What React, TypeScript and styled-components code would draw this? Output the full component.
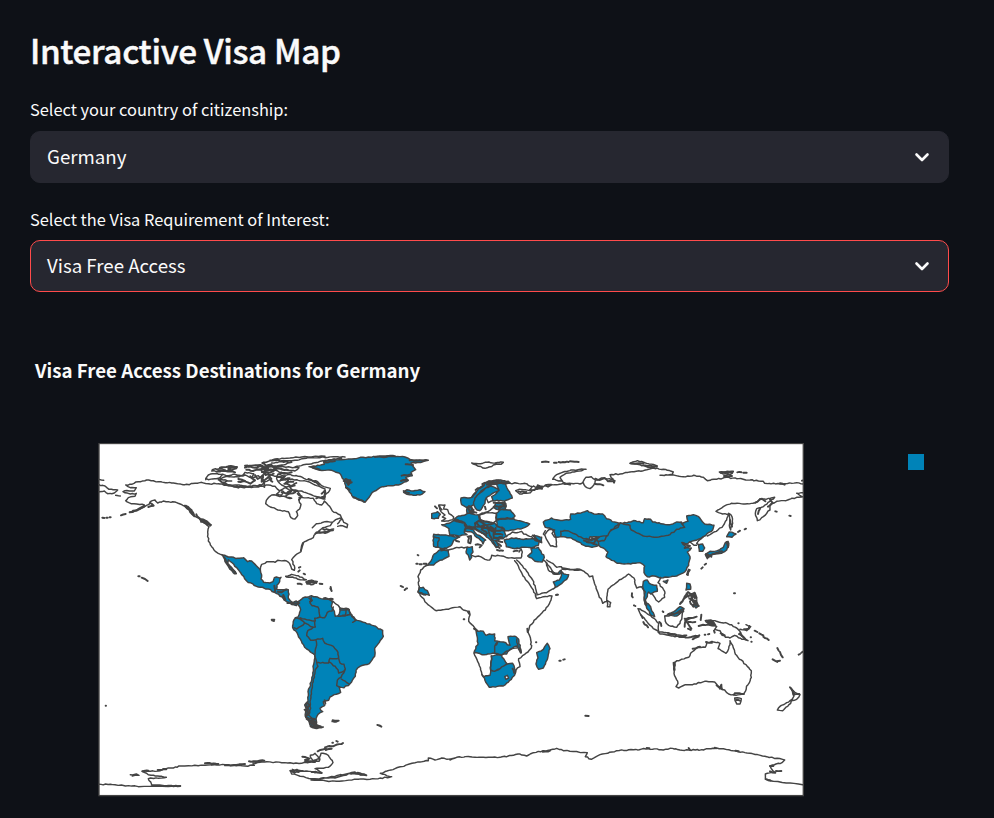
import React from "react";
import styled, { createGlobalStyle } from "styled-components";

const GlobalStyle = createGlobalStyle`
  * { box-sizing: border-box; }
  body {
    margin: 0;
    background: #0e1117;
    color: #fafafa;
    font-family: "Noto Sans CJK SC", "Noto Sans", sans-serif;
  }
`;

const Page = styled.main`
  display: flex;
  flex-direction: column;
  width: 994px;
  height: 818px;
  padding: 27px 45px 0 30px;
  overflow: hidden;
`;

const Title = styled.h1`
  margin: 0;
  height: 46px;
  font-size: 33.3px;
  font-weight: 500;
  line-height: 46px;
  letter-spacing: -0.37px;
  -webkit-text-stroke: 0.45px #fafafa;
  white-space: nowrap;
`;

const Field = styled.section<{ $gap: number }>`
  display: flex;
  flex-direction: column;
  margin-top: ${(p) => p.$gap}px;
`;

const Label = styled.label<{ $space: number }>`
  height: 26px;
  margin-bottom: ${(p) => p.$space}px;
  font-size: 16.4px;
  line-height: 26px;
`;

const Select = styled.div<{ $active?: boolean }>`
  display: flex;
  align-items: center;
  justify-content: space-between;
  height: 52px;
  padding: 0 15px 0 16px;
  border: 1px solid ${(p) => (p.$active ? "#ff4b4b" : "#262730")};
  border-radius: 10px;
  background: #262730;
  font-size: 18.7px;
  line-height: 28px;
`;

const Value = styled.span`
  height: 30px;
`;

const Chevron = styled.svg`
  width: 22px;
  height: 22px;
  fill: none;
  stroke: #fafafa;
  stroke-width: 2.6;
  stroke-linecap: round;
  stroke-linejoin: round;
`;

const ChartTitle = styled.h2`
  margin: 64px 0 0 5px;
  height: 28px;
  font-size: 18.7px;
  font-weight: 700;
  line-height: 28px;
  white-space: nowrap;
`;

const ChartRow = styled.div`
  display: flex;
  align-items: flex-start;
  justify-content: space-between;
  margin: 59px 25.5px 0 68px;
`;

const MapSvg = styled.svg`
  width: 706px;
  height: 354px;
`;

const LegendSwatch = styled.div`
  width: 16px;
  height: 16px;
  margin-top: 11px;
  background: #0083b8;
`;

type Sheet = { x: number; y: number; land?: string[]; coast?: string[]; holes?: string[]; specks?: string[] };

// Each sheet lists "x,y" outlines in third-pixel units from its own origin.
const sheets: Sheet[] = [
  {
    x: 95, y: 435,
    land: [
      "382,360 400,366 410,366 428,370 446,368 458,380 470,378 484,392 496,404 500,420 498,432 506,442 524,444 534,440 538,428 558,427 554,440 546,450 544,462 580,464 582,478 580,490 592,502 604,498 614,504 604,512 590,508 575,500 562,486 545,476 520,462 490,456 455,438 446,424 430,404 412,384 400,374 398,386 410,398 424,416 418,416 402,398 390,380",
    ],
    coast: [
      "12,149 30,153 42,163 68,165 58,174 38,176 28,168 12,170",
      "12,133 26,136", "62,181 76,183",
      "520,150 490,156 440,157 400,152 370,146 340,146 318,142 300,145 270,149 230,144 190,140 155,135 130,140 110,148 92,150 106,158 124,158 118,168 90,167 84,170 106,177 124,175 120,184 100,188 92,197 108,206 125,207 148,210 132,220 104,232 130,224 150,214 162,208 166,200 180,195 188,204 205,198 220,200 245,203 268,212 282,224 292,238 312,250 325,262 342,275 338,292 340,318 350,335 362,350 382,360",
      "496,404 500,388 516,380 540,382 548,376 575,378 584,386 590,402 598,406 598,392 590,374 600,362 618,350 624,326 634,318 655,308 662,296 690,290 716,282",
      "652,278 664,266 690,260 712,262 706,272 684,278 660,296",
      "712,262 722,254 740,250",
      "590,190 560,184 530,180 514,196 512,206 526,216 556,226 580,230 588,248 600,252 608,242 604,230 614,222 618,208 612,196 618,184 610,172",
      "612,188 640,188 655,190 665,206 680,210 688,198 704,214 712,228 736,240 740,250",
      "520,150 540,154 552,166 566,170 560,180 544,178 556,166 570,158 590,168 580,178 570,184 590,190",
      "545,126 580,118 610,124 640,134 668,140 680,152 706,160 700,172 684,186 690,192 660,184 640,176 620,168 600,170 585,158 600,152 575,156 560,150 548,138 545,126",
      "370,134 395,124 430,126 450,120 470,128 490,122 500,130 510,140 500,150 470,154 440,152 400,150 385,142 410,138 372,134",
      "332,134 340,120 360,116 384,118 370,130 340,134 332,130",
      "352,104 375,100 392,106 376,110 350,108",
      "505,82 540,76 600,76 640,68 700,67 750,66",
      "525,76 560,70 620,66 690,64",
      "600,96 640,88 690,76 740,70", "530,84 560,80 590,82 560,90 540,94 612,98 600,108 560,104 520,92",
      "500,112 530,104 560,112 545,124 520,118 530,132 510,140",
      "548,138 580,132 610,136 640,140 660,150 690,162",
      "572,424 590,418 610,422 634,434 616,434 592,426 574,426",
      "384,118 400,122 420,118 440,122 450,112 476,116 470,128",
    ],
    specks: [
      "375,98 400,94 426,96 400,100", "392,108 420,112 400,104", "450,92 480,98 500,94", "454,104 474,108 496,104 520,100 506,114 532,110 550,100 580,106", "430,132 450,138 430,140", "480,120 488,132 504,120 500,140 520,126 532,140", "502,84 512,92 528,88 540,102 520,106 502,98",
      "546,126 570,124 556,136 584,130 572,144 595,140", "560,172 580,176 600,172", "664,190 690,186 690,166 680,176", "268,212 280,216 294,232 298,244 286,232 276,218", "304,238 316,252 330,256", "318,260 334,258 348,270 340,268 328,264", "160,216 176,212 166,204", "104,232 130,224 148,214", "78,241 92,237", "22,248 28,249", "34,248 38,248", "44,247 47,247", "130,424 134,424", "140,428 150,432 158,438", "624,324 618,346",
      "634,442 650,436 666,440 654,448 636,446", "608,446 620,448", "674,446 682,447", "612,398 616,396", "610,410 614,406", "626,416 630,418", "706,460 710,468", "684,282 714,286 690,294 672,290", "400,150 430,158 440,152 462,156", "530,554 538,554",
      "538,452 540,470", "548,470 560,472 574,464", "562,484 568,494",
      "366,104 384,108 408,106 424,100", "450,98 470,92 496,90 508,96", "490,104 516,96 540,94", "500,108 512,120 536,116", "466,124 480,136 466,146 452,140", "506,140 508,156", "372,134 388,148 410,152", "550,118 568,114 590,112", "568,146 592,152 604,144", "608,176 620,184 612,194", "574,176 590,164 608,168", "640,132 664,142 672,150", "272,212 290,226 296,240", "308,246 322,258 346,272", "386,366 396,382", "400,388 420,412", "634,440 664,444",
    ],
  },
  {
    x: 285, y: 435,
    land: [
      "72,95 118,88 116,80 140,74 190,72 250,66 310,62 360,66 376,74 430,76 400,82 378,84 384,94 392,104 378,112 382,122 362,128 370,136 340,150 310,152 285,158 262,172 250,190 240,202 220,194 205,188 194,172 182,158 178,134 162,114 140,106 105,106",
      "356,172 366,164 385,168 405,164 420,170 410,178 385,181 366,178",
      "440,236 458,230 466,238 460,250 440,250",
      "446,298 490,302 524,306 506,316 500,330 484,340 466,340 460,336 446,334 444,316",
      "462,346 470,342 490,346 492,364 476,372 458,380 446,390 424,392 438,378 444,362",
    ],
    coast: [
      "462,210 480,210 476,222 488,224 492,236 506,246 504,254 484,258 470,258 482,250 472,246 480,240 468,230 464,222 462,210",
      "158,266 172,252 176,262 188,268 186,278 172,272 158,274",
      "448,306 462,308 458,334",
      "560,84 580,86 600,82 630,84 655,82 648,88 625,90 612,96 600,100 580,94 560,84",
    ],
    specks: ["374,76 420,76", "362,88 384,90", "350,122 378,118", "348,138 366,134", "176,138 200,142 190,150 182,138", "186,158 194,164", "118,82 150,78", "80,96 104,104", "514,318 522,320", "398,360 400,361", "394,386 398,386", "404,388 410,388", "416,386 424,386", "350,454 354,456", "362,462 366,460", "450,214 456,220", "462,212 470,224", "356,168 372,174", "206,186 236,200", "182,132 196,136", "270,66 330,64"],
  },
  {
    x: 425, y: 470,
    land: [
      "50,164 72,160 86,152 96,150 118,158 122,172 118,188 126,194 100,198 74,194 72,176",
      "86,152 100,138 118,136 128,130 142,132 160,134 164,150 152,160 150,172 126,172 118,158",
      "126,130 126,114 140,108 140,122 148,128",
      "120,176 150,172 146,182 156,194 168,200 182,210 178,212 174,222 166,210 150,198 140,186 122,184",
      "150,160 164,152 184,156 210,160 216,170 238,178 244,198 234,206 222,208 212,212 222,232 212,230 200,214 180,196 164,184 152,176",
      "214,150 240,146 266,146 284,152 314,162 300,172 290,176 272,178 252,182 240,182 232,172 216,168",
      "214,130 230,118 256,120 270,138 260,146 216,148",
      "206,112 212,100 240,96 244,108 240,118 214,118",
      "108,84 140,82 152,66 166,52 186,36 220,30 250,34 256,40 242,42 216,36 190,48 170,66 150,84 146,104 124,112 110,104",
      "146,104 150,84 172,60 196,48 212,54 222,62 200,72 184,84 180,100 172,112 164,122 156,120",
      "214,40 242,40 246,54 256,72 262,84 240,92 204,92 200,80 216,68 222,60",
      "238,210 260,204 290,208 320,206 344,212 340,226 326,232 300,232 270,236 244,230",
      "318,236 340,232 348,244 358,262 352,276 330,274 308,258 320,248",
      "322,196 350,202 350,218 338,210", "126,232 142,230 144,246 138,254 140,262 134,270 130,256 124,250",
    ],
    coast: [
      "48,242 70,240 90,234 128,232", "140,256 150,260 160,258 180,268 194,270 200,256 230,258 250,264 274,264 288,264 292,246 288,236",
      "244,200 262,186 276,188 290,184 296,192 320,200 326,206", "164,134 184,128 214,130 214,152 206,158 184,154 166,148",
      "256,40 300,40 322,50 314,62 282,58 272,62 284,72 316,68 330,58 350,56 340,48", "184,84 190,98 204,92", "164,134 178,128 190,124 206,112",
      "354,270 366,280 380,300 390,312", "282,246 286,240",
    ],
    specks: ["128,200 138,198 136,220 130,218 132,204", "152,224 170,226 164,232", "216,240 234,242", "266,244 278,242", "212,212 232,216", "206,218 214,232", "152,60 176,46", "172,42 206,32 222,32", "186,44 212,42 230,36", "128,114 140,128", "146,126 154,128", "206,98 240,102", "206,110 240,110", "164,154 184,166 206,160", "156,170 184,174 202,184", "176,162 170,178 186,190", "186,168 206,180 206,200", "190,178 194,196 206,212", "212,174 208,192 232,194", "206,204 232,202", "118,158 126,170 148,174", "92,212 100,214", "280,64 304,66", "338,46 354,50", "164,134 164,152 150,160", "92,148 112,158", "180,110 182,118", "328,196 330,210 348,216", "130,110 134,126 146,120", "132,108 142,116 138,130", "152,178 168,186 184,196", "196,170 212,182 236,182", "218,220 228,228", "218,230 224,234", "156,160 166,170 178,168", "126,174 142,178", "142,80 152,68", "190,40 224,38 246,38", "242,102 222,116", "220,148 248,144"],
  },
  {
    x: 530, y: 440,
    land: [
      "40,246 64,234 84,240 104,240 122,238 122,222 150,220 172,212 192,222 218,222 230,236 254,246 270,250 264,262 240,274 234,286 210,290 180,290 176,300 160,296 140,284 110,272 92,274 92,290 78,292 70,272 58,264 46,262",
      "92,274 110,272 140,284 160,296 176,300 210,290 234,286 222,302 204,304 206,316 186,322 162,316 146,306 124,294 92,290",
      "270,248 300,256 304,270 340,288 380,292 420,284 440,268 464,262 454,250 474,244 470,228 490,224 506,230 524,252 552,256 548,270 532,280 520,290 504,298 484,304 472,312 458,312 470,322 484,324 472,336 480,350 476,376 464,396 440,408 414,412 392,414 372,408 352,410 342,398 344,378 330,368 302,372 262,370 228,350 234,336 220,324 206,316 204,304 222,302 234,286 240,274",
      "272,250 296,246 316,242 340,248 344,236 362,238 368,246 400,252 420,254 436,248 454,246 464,262 440,268 420,284 380,292 340,288 304,270 300,256",
      "340,424 352,420 358,430 380,436 382,454 362,462 356,456 352,470 346,480 350,496 342,480 346,456 338,440",
      "344,484 362,500 374,530 364,526 350,504", "400,424 414,420 410,430", "470,404 476,388 480,390 474,406", "468,450 470,430 480,432 482,448",
      "412,524 436,512 450,500 462,506 458,516 440,528", "506,314 518,312 524,324 518,334 508,334",
      "526,344 540,334 562,332 580,322 586,308 594,304 596,318 590,330 574,340 556,342 540,346 532,356", "590,290 598,276 618,282 606,292", "488,496 500,484 506,498 498,504",
    ],
    coast: [
      "46,282 58,268 74,270 66,280 78,294 80,320 62,318 52,302 40,282 46,272",
      "98,384 120,388 150,388 166,398 178,410 188,408 192,424 204,458 218,490 230,484 234,448 264,424 296,402 312,414 320,444 334,440 342,452 344,480",
      "232,482 242,488 240,500 232,500 232,482", "392,412 384,428 404,454 404,472 386,486 378,480 366,462",
      "520,290 506,302 500,310 506,314", "480,306 492,316 500,316", "596,220 606,230 608,250 602,270 598,256 600,240 596,220",
      "532,288 552,276 576,262 590,240 596,222 578,222 558,214 580,200 604,190 640,192 676,188 690,176 708,178 734,172 720,184 700,200 680,206 676,220 682,242 700,230 720,210 722,192 740,184 768,182 800,172 820,170", "800,160 820,158", "804,162 816,170",
      "10,138 30,144 50,134 80,134 118,130 150,132 160,124 168,112 184,110 196,120 192,134 180,146 166,140 160,128",
      "196,120 220,114 250,118 240,104 270,102 300,96 340,92 370,84 400,88 430,96 426,104 390,106 420,104 460,110 490,106 520,112 532,122 560,118 590,112 620,116 660,120 700,124 704,130 750,132 800,128 820,132",
      "68,118 80,104 100,96 130,90 168,88 140,94 108,100 90,112 98,124 68,118", "300,70 322,62 350,70 382,78 360,82 330,74 300,70", "568,96 610,94 600,104 580,102 568,96",
    ],
    specks: ["36,66 56,66", "72,68 80,68", "86,66 116,66", "120,64 146,66", "302,70 340,70", "340,76 380,80", "572,98 606,98", "582,108 606,108", "622,97 634,97", "640,98 650,98", "816,122 820,121", "0,150 14,150 24,136 36,146", "46,136 54,140 64,134", "196,116 210,120 224,114 234,124 254,122 252,128", "196,132 220,136", "100,128 120,134", "750,130 764,134", "676,188 696,176 706,184", "720,178 728,188 714,200", "736,214 740,215", "778,227 782,228", "644,268 648,266", "624,276 630,272", "600,240 606,260", "612,460 615,460", "524,374 528,371", "514,386 518,382", "168,296 186,300 206,292 190,310 170,306", "186,294 202,302", "456,308 480,318 464,324", "530,350 550,342 576,334", "450,492 464,470 470,462", "474,456 482,462 494,458 500,474 490,466 484,480 498,484 492,492", "480,484 490,500", "306,460 308,472", "312,496 316,498", "398,514 400,516", "78,465 82,464", "690,206 684,222", "480,466 490,460 494,474", "484,470 490,486 500,480", "494,494 506,498", "534,344 544,350", "528,342 536,352", "590,306 594,322", "162,302 184,308 200,314", "416,522 440,520 456,508", "448,522 460,514", "470,460 476,470"],
  },
  {
    x: 270, y: 575,
    land: [
      "82,84 100,68 124,62 160,72 182,76 208,98 236,102 246,122 256,134 280,142 310,152 338,166 340,184 328,202 314,220 314,244 298,266 270,274 258,286 256,304 240,326 222,338 208,336 212,352 180,366 176,376 160,380 164,392 150,400 158,410 144,418 138,432 140,442 120,440 106,424 108,400 104,390 114,380 114,350 124,320 130,280 134,240 110,222 96,204 84,180 68,158 72,134 84,126 92,104",
      "116,436 136,440 140,452 160,456 140,460 120,450",
    ],
    holes: ["188,78 208,96 210,108 204,122 196,124 190,104 184,94"],
    coast: [
      "124,66 120,84 126,92 144,96 148,116 150,126 134,130 136,156 114,166 110,182 122,196 138,194 140,210 134,240",
      "150,126 164,128 172,112 186,108 190,96", "138,194 158,190 164,204 190,214 204,232 206,250", "134,240 140,262 176,264 180,250 206,250 210,264 222,268 226,282 222,288 206,294", "180,262 204,284 206,294", "226,282 214,306 202,316 200,332 208,336", "214,312 236,326", "140,262 144,274 136,284 130,320 124,350 120,380 122,400 116,420 130,436",
      "76,128 90,132 104,144 92,154 80,162 72,158", "90,128 104,132 132,138", "104,144 128,156", "210,104 228,104 226,120 212,124", "228,104 238,104 240,118 228,120", "204,124 220,122 246,120", "248,142 258,136",
    ],
    specks: ["188,436 206,437 192,440", "322,450 334,455", "6,136 12,138", "118,70 126,76 120,80", "112,382 120,392 110,400", "104,404 118,412 108,422", "112,428 136,434 120,442 150,454 132,456", "164,376 166,386", "162,70 188,72", "40,60 46,74", "52,84 68,84 84,84", "108,386 112,410 108,426", "114,396 114,420", "110,432 130,446 146,456", "118,438 134,452", "128,440 138,448", "122,454 140,460 152,454", "66,88 78,86", "182,36 184,46", "246,124 256,134"],
  },
  {
    x: 400, y: 560,
    land: [
      "54,96 58,82 70,82 82,92 88,106 70,104",
      "228,212 250,214 258,226 268,222 284,222 284,242 294,244 290,254 284,258 284,280 252,284 222,278 234,250",
      "284,258 294,244 310,246 330,256 324,230 348,230 356,238 360,262 364,278 356,268 350,258 330,270 320,282 304,284 284,280",
      "274,288 290,284 304,286 322,312 300,326 282,334 272,330",
      "246,344 252,350 270,346 272,330 284,334 300,326 322,312 338,310 344,326 346,340 334,358 310,378 268,382 258,368",
      "484,34 492,42 506,44 500,58 486,70 466,82 460,66 478,60 484,48", "456,36 474,40 484,30 480,42 460,42", "442,250 450,266 444,290 430,324 416,328 408,312 414,294 410,278 430,268",
    ],
    holes: ["314,350 322,346 326,354 318,358"],
    coast: [
      "80,12 62,30 54,50 58,80 54,96 66,112 80,130 108,152 145,148 180,140 190,150 208,154 210,165 206,184 228,208",
      "222,280 236,310 246,344", "272,330 274,288", "346,340 348,330 360,320 356,296 384,276 394,264 392,240 384,214 390,196 412,172 436,150 450,126 456,108 430,110 410,116 406,104", "304,286 330,268 350,264",
      "344,2 360,30 382,64 400,90 408,108", "350,0 362,12 380,34 398,60 408,90 412,104 440,98 466,82", "436,4 445,30 456,36", "440,0 458,10 470,22 484,20 488,28 540,30", "350,238 354,260",
    ],
    specks: ["58,98 76,104", "2,78 6,80", "14,90 18,86", "204,156 208,162", "191,178 193,178", "382,206 383,216", "338,326 342,338", "408,247 409,247", "478,302 482,302", "490,299 494,298", "468,105 474,104", "358,264 362,278", "222,206 232,212"],
  },
  {
    x: 620, y: 560,
    coast: [
      "54,146 72,154 96,172 116,190 116,214 100,206 80,184 62,164 54,146", "114,216 140,218 170,224 200,226 190,232 160,228 120,222 114,216",
      "134,168 146,168 188,154 186,170 180,190 170,202 146,196 136,184 134,168",
      "256,182 272,180 296,186 322,190 350,204 362,218 356,222 384,242 366,238 344,226 330,234 306,226 300,212 284,208 290,200 270,196 256,182",
      "360,208 380,212 392,200 378,194",
      "160,308 184,298 206,292 216,276 236,262 256,262 260,248 276,244 300,250 294,266 318,280 326,266 330,242 338,256 344,276 354,292 378,314 394,332 394,352 384,374 372,400 348,406 326,402 314,390 300,384 284,366 254,364 218,374 196,374 176,384 168,380 174,370 162,340 160,308",
      "344,414 364,416 360,432 350,432 344,414", "512,384 526,398 540,404 530,418 514,422 522,408 512,384", "516,418 512,430 488,452 472,450 484,436 500,428 516,418",
    ],
    specks: ["194,176 212,174 196,184", "214,174 230,170", "196,178 194,200", "200,186 214,206", "204,186 226,186", "204,206 212,210", "244,164 242,180", "236,198 262,194", "258,182 280,186 286,196 262,194", "144,222 168,226", "178,230 210,232 238,226", "218,238 236,230", "264,223 268,222", "254,224 256,224", "282,212 284,218", "302,220 314,226", "372,208 386,206 388,198", "404,212 412,216", "418,220 430,226", "430,230 446,240", "362,220 376,238", "392,232 393,232", "394,245 395,245", "472,264 476,272", "480,276 488,292", "458,298 472,306", "470,304 480,302", "536,284 540,282", "544,278 548,275", "355,190 356,190", "164,308 164,330", "290,376 300,386 304,374 306,388", "342,404 344,400 372,402", "348,420 360,422", "510,382 520,394 522,404 538,402", "258,246 276,248", "218,266 240,260", "64,166 68,174", "70,186 84,202", "118,186 124,198", "182,130 200,110", "206,98 214,106 222,100 228,114", "208,116 222,122 230,132", "264,188 278,192"],
  },
  {
    x: 95, y: 700,
    coast: [
      "12,253 60,254 130,260 256,258 170,254 160,236 214,232 168,226 142,214 196,212 214,206 260,198 330,196 390,194 450,198 478,196 474,184 500,186 560,188 620,190 650,186 672,184 678,160 684,160 700,166 714,188 700,202 660,206 680,220 640,214 586,212 590,222 650,236 720,234 780,216 814,226 760,220 700,232 648,240 724,244 790,238 850,236 890,230 856,220 900,206 960,188 1000,182 1000,174 1020,180 1040,174 1056,178 1080,174",
      "106,224 124,222 132,226 112,228", "646,166 660,160 672,176 654,182 646,170", "592,208 624,212 600,218 592,210",
    ],
    specks: ["668,154 690,146 710,146 692,150", "690,142 720,136 744,129", "712,128 714,128", "724,123 728,125", "622,170 644,176 630,180 660,186", "630,186 664,182", "462,184 508,182 480,190", "330,190 370,192 350,194", "188,210 214,208", "142,214 160,212", "586,212 598,218", "788,218 814,226 796,224", "650,216 680,218", "32,17 33,17", "206,258 256,258", "712,64 730,62", "850,76 858,79", "390,196 450,192"],
  },
  {
    x: 450, y: 700,
    coast: ["0,180 20,172 60,170 100,172 150,172 190,166 204,162 230,168 250,158 300,150 320,145 340,152 412,158 406,170 424,178 450,164 500,152 550,149 595,146 640,150 660,145 690,150 718,150 760,150 770,146 800,144 850,152 900,160 950,170 1004,180 996,188 960,198 974,216 946,222 946,238 970,244 1058,254"],
    specks: ["406,47 416,48", "978,213 994,213", "590,144 598,145", "716,144 720,150", "794,143 798,145", "856,152 866,154", "960,198 970,198", "960,214 976,218", "950,238 962,242", "278,155 300,152"],
  },
];

type Point = [number, number];

const noise = (a: number, b: number) => {
  const v = Math.sin(a * 12.9898 + b * 78.233) * 43758.5453;
  return v - Math.floor(v) - 0.5;
};

// Breaks long edges into short irregular ones; the offset depends only on position.
function coastline(text: string, closed: boolean, ox: number, oy: number): string {
  const base = text.split(" ").map((p) => p.split(",").map(Number) as Point);
  if (closed) base.push(base[0]);
  const out: Point[] = [base[0]];
  for (let i = 1; i < base.length; i++) {
    const a = base[i - 1];
    const b = base[i];
    const len = Math.hypot(b[0] - a[0], b[1] - a[1]);
    const n = Math.min(7, Math.floor(len / 6));
    for (let k = 1; k < n; k++) {
      const t = k / n;
      const x = a[0] + (b[0] - a[0]) * t;
      const y = a[1] + (b[1] - a[1]) * t;
      out.push([x + noise(Math.round(x), Math.round(y)) * 3.4, y + noise(Math.round(y), Math.round(x)) * 3.4]);
    }
    out.push(b);
  }
  return "M" + out.map(([x, y]) => `${(ox + x / 3).toFixed(2)} ${(oy + y / 3).toFixed(2)}`).join("L") + (closed ? "Z" : "");
}

function WorldMap() {
  const draw = (key: "land" | "coast" | "holes" | "specks", closed: boolean) =>
    sheets.flatMap((s) => (s[key] ?? []).map((t) => coastline(t, closed, s.x, s.y))).join("");
  return (
    <MapSvg viewBox="98 443 706 354" role="img" aria-label="World map">
      <rect x="99" y="443.5" width="704.3" height="352.3" fill="#fff" />
      <g stroke="#444" strokeWidth="1.45" strokeLinejoin="round" strokeLinecap="round" fill="none">
        <path d={draw("land", true)} fill="#0083b8" />
        <path d={draw("holes", true)} fill="#fff" />
        <path d={draw("coast", false)} />
        <path d={draw("specks", false)} strokeWidth="1.95" />
      </g>
      <rect x="99" y="443.5" width="704.3" height="352.1" fill="none" stroke="#444" strokeWidth="1.35" />
    </MapSvg>
  );
}

type SelectFieldProps = { label: string; value: string; gap: number; space: number; active?: boolean };

function SelectField({ label, value, gap, space, active }: SelectFieldProps) {
  return (
    <Field $gap={gap}>
      <Label $space={space}>{label}</Label>
      <Select $active={active}>
        <Value>{value}</Value>
        <Chevron viewBox="0 0 22 22">
          <path d="M5.5 8.5 11 14l5.5-5.5" />
        </Chevron>
      </Select>
    </Field>
  );
}

export default function App() {
  return (
    <>
      <GlobalStyle />
      <Page>
        <Title>Interactive Visa Map</Title>
        <SelectField label="Select your country of citizenship:" value="Germany" gap={23} space={9} />
        <SelectField label="Select the Visa Requirement of Interest:" value="Visa Free Access" gap={23} space={8} active />
        <ChartTitle>Visa Free Access Destinations for Germany</ChartTitle>
        <ChartRow>
          <WorldMap />
          <LegendSwatch />
        </ChartRow>
      </Page>
    </>
  );
}
